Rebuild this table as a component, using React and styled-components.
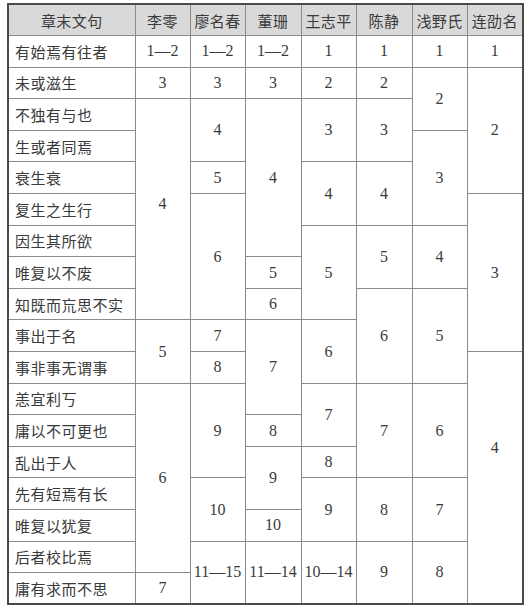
import React from "react";
import styled, { createGlobalStyle } from "styled-components";

const GlobalStyle = createGlobalStyle`
  html, body {
    margin: 0;
    padding: 0;
    background: #ffffff;
  }
`;

const Page = styled.div`
  padding: 3px 0 0 7px;
  font-family: "Liberation Serif", "Noto Sans CJK SC", serif;
  color: #3a3a3a;
`;

const Table = styled.table`
  width: 515px;
  table-layout: fixed;
  border-collapse: collapse;
  border: 2px solid #4a4a4a;
`;

const Row = styled.tr`
  height: 31.6px;
`;

const Head = styled.th`
  background: #d9d9d9;
  font-weight: 400;
  font-size: 15px;
  letter-spacing: 0.4px;
  border: 1px solid #8a8a8a;
  padding: 0;
  text-align: center;
  white-space: nowrap;
`;

const Phrase = styled.td`
  font-size: 15px;
  letter-spacing: 0.5px;
  border: 1px solid #8a8a8a;
  padding: 0 0 0 6px;
  text-align: left;
  white-space: nowrap;
`;

const Num = styled.td`
  font-size: 16px;
  border: 1px solid #8a8a8a;
  padding: 0 0 ${(p) => p.$lift || 0}px 0;
  text-align: center;
  vertical-align: middle;
  white-space: nowrap;
`;

const widths = [127, 55, 55, 56, 55, 56, 55, 56];
const headers = ["章末文句", "李零", "廖名春", "董珊", "王志平", "陈静", "浅野氏", "连劭名"];

// each row: phrase, then the cells that start in this row as [text, rowspan, lift]
const rows = [
  ["有始焉有往者", [["1—2"], ["1—2"], ["1—2"], ["1"], ["1"], ["1"], ["1"]]],
  ["未或滋生", [["3"], ["3"], ["3"], ["2"], ["2"], ["2", 2], ["2", 4]]],
  ["不独有与也", [["4", 7, 10], ["4", 2], ["4", 5], ["3", 2], ["3", 2]]],
  ["生或者同焉", [["3", 3]]],
  ["衰生衰", [["5"], ["4", 2], ["4", 2]]],
  ["复生之生行", [["6", 4], ["3", 5]]],
  ["因生其所欲", [["5", 3], ["5", 2], ["4", 2]]],
  ["唯复以不废", [["5"]]],
  ["知既而巟思不实", [["6"], ["6", 3], ["5", 3]]],
  ["事出于名", [["5", 2], ["7"], ["7", 3], ["6", 2]]],
  ["事非事无谓事", [["8"], ["4", 8, 60]]],
  ["恙宜利丂", [["6", 6], ["9", 3], ["7", 2], ["7", 3], ["6", 3]]],
  ["庸以不可更也", [["8"]]],
  ["乱出于人", [["9", 2], ["8"]]],
  ["先有短焉有长", [["10", 2], ["9", 2], ["8", 2], ["7", 2]]],
  ["唯复以犹复", [["10"]]],
  ["后者校比焉", [["11—15", 2], ["11—14", 2], ["10—14", 2], ["9", 2], ["8", 2]]],
  ["庸有求而不思", [["7"]]],
];

export default function App() {
  return (
    <>
      <GlobalStyle />
      <Page>
        <Table>
          <colgroup>
            {widths.map((w, i) => (
              <col key={i} style={{ width: w }} />
            ))}
          </colgroup>
          <thead>
            <Row>
              {headers.map((h) => (
                <Head key={h}>{h}</Head>
              ))}
            </Row>
          </thead>
          <tbody>
            {rows.map(([phrase, cells]) => (
              <Row key={phrase}>
                <Phrase>{phrase}</Phrase>
                {cells.map(([text, span, lift], i) => (
                  <Num key={i} rowSpan={span || 1} $lift={lift}>
                    {text}
                  </Num>
                ))}
              </Row>
            ))}
          </tbody>
        </Table>
      </Page>
    </>
  );
}
